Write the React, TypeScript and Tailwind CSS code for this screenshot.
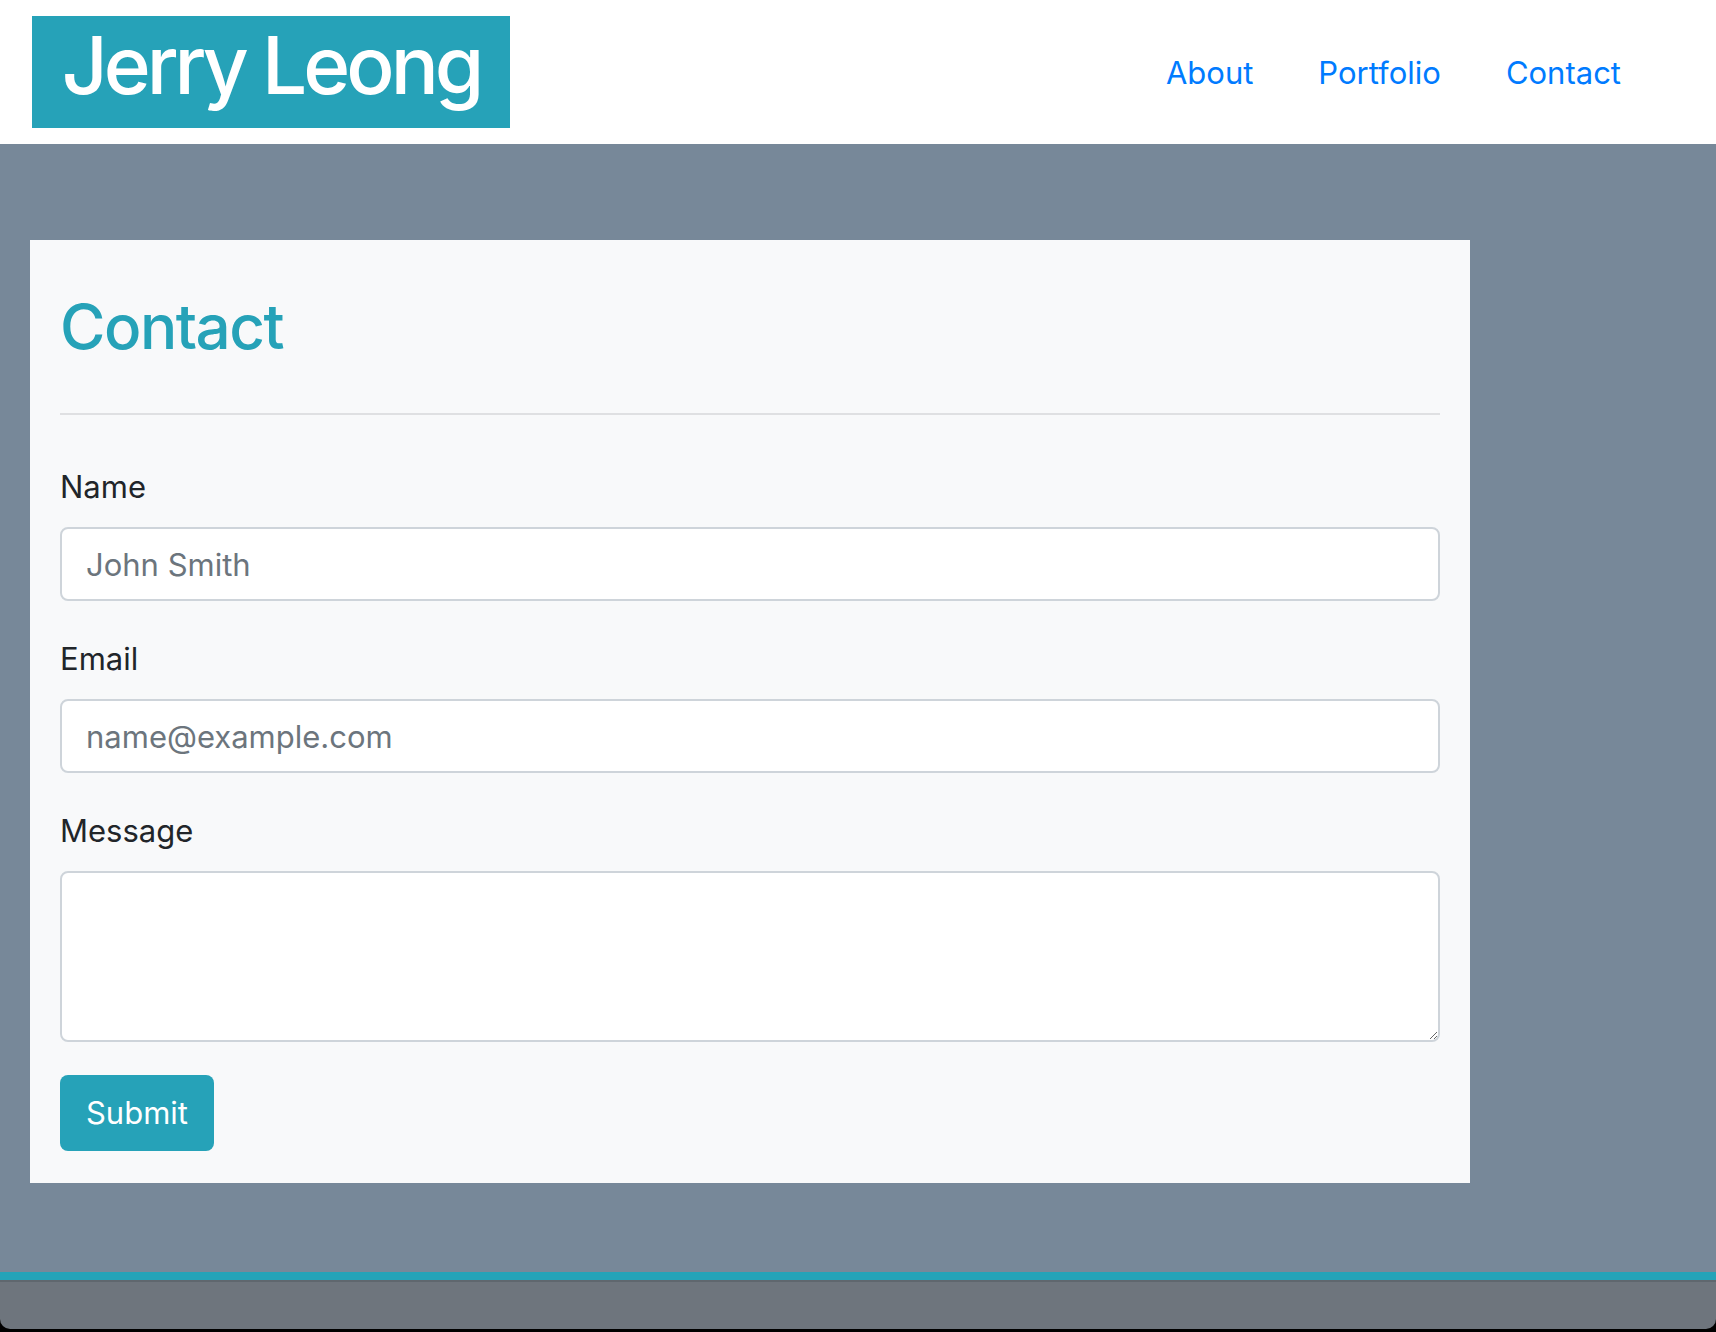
import React from "react";

const FONT = "font-['Inter','Noto_Sans',sans-serif]";

function Field({ label, children }: { label: string; children: React.ReactNode }) {
  return (
    <div>
      <label className="block h-[46px] text-[31px] leading-[46px] text-[#212529]">{label}</label>
      <div className="mt-[17px]">{children}</div>
    </div>
  );
}

export default function App() {
  const inputCls =
    "block w-full rounded-[8px] border-2 border-[#ced4da] bg-white px-[24px] text-[31px] text-[#495057] placeholder:text-[#6c757d] outline-none";

  return (
    <div className={`${FONT} flex min-h-[1332px] flex-col bg-black`}>
      {/* Header */}
      <header className="flex h-[144px] items-start justify-between bg-white">
        <div className="ml-[32px] mt-[16px] flex h-[112px] w-[478px] items-start justify-center bg-[#26a2b8] pt-[9px]">
          <span className="text-[80px] font-medium leading-none tracking-[-4px] text-white">Jerry Leong</span>
        </div>
        <nav className="mr-[95px] mt-[50px] flex gap-[65px] text-[31px] leading-[46px] text-[#007bff]">
          <a href="#">About</a>
          <a href="#">Portfolio</a>
          <a href="#">Contact</a>
        </nav>
      </header>

      {/* Main */}
      <main className="h-[1128px] bg-[#778899] pt-[96px]">
        <div className="ml-[30px] w-[1440px] bg-[#f8f9fa] px-[30px] pb-[32px] pt-[48px]">
          <h1 className="text-[62px] font-medium leading-[77px] tracking-[-1.5px] text-[#26a2b8]">Contact</h1>
          <hr className="mt-[48px] border-0 border-t-2 border-[#dfe0e2]" />

          <form className="mt-[49px] flex flex-col gap-[35px]">
            <Field label="Name">
              <input className={`${inputCls} h-[74px]`} placeholder="John Smith" />
            </Field>
            <Field label="Email">
              <input className={`${inputCls} h-[74px]`} placeholder="name@example.com" />
            </Field>
            <Field label="Message">
              <textarea className={`${inputCls} h-[171px] py-[12px]`} />
            </Field>
          </form>

          <button className="mt-[33px] h-[76px] w-[154px] rounded-[8px] bg-[#26a2b8] text-[31px] text-white">
            Submit
          </button>
        </div>
      </main>

      {/* Footer */}
      <footer className="h-[57px] rounded-b-[10px] border-t-[8px] border-[#24a3b8] bg-[#6e757d]">
        <div className="h-[2px] bg-[#5f676e]" />
      </footer>
    </div>
  );
}
